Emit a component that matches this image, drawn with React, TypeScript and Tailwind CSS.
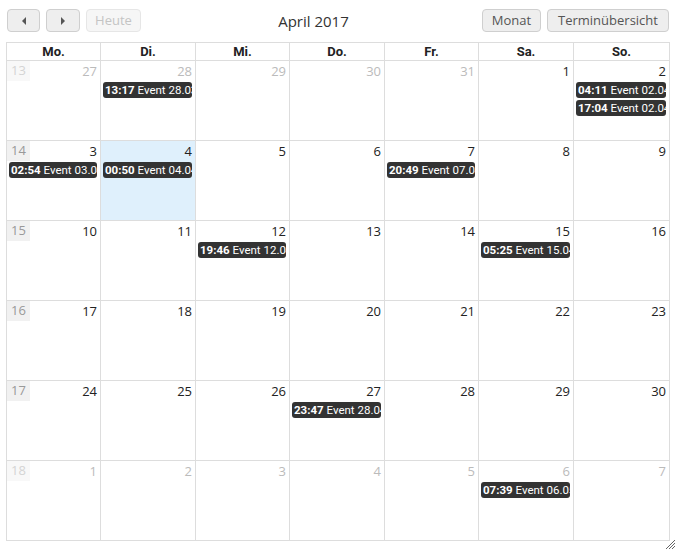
import React from "react";

type Ev = { time: string; label: string };
type Day = { n: number; other?: boolean; today?: boolean; events?: Ev[] };

const weeks: { wk: number; faded?: boolean; days: Day[] }[] = [
  {
    wk: 13,
    faded: true,
    days: [
      { n: 27, other: true },
      { n: 28, other: true, events: [{ time: "13:17", label: "Event 28.03" }] },
      { n: 29, other: true },
      { n: 30, other: true },
      { n: 31, other: true },
      { n: 1 },
      { n: 2, events: [{ time: "04:11", label: "Event 02.04" }, { time: "17:04", label: "Event 02.04" }] },
    ],
  },
  {
    wk: 14,
    days: [
      { n: 3, events: [{ time: "02:54", label: "Event 03.04" }] },
      { n: 4, today: true, events: [{ time: "00:50", label: "Event 04.04" }] },
      { n: 5 },
      { n: 6 },
      { n: 7, events: [{ time: "20:49", label: "Event 07.04" }] },
      { n: 8 },
      { n: 9 },
    ],
  },
  {
    wk: 15,
    days: [
      { n: 10 },
      { n: 11 },
      { n: 12, events: [{ time: "19:46", label: "Event 12.04" }] },
      { n: 13 },
      { n: 14 },
      { n: 15, events: [{ time: "05:25", label: "Event 15.04" }] },
      { n: 16 },
    ],
  },
  {
    wk: 16,
    days: [{ n: 17 }, { n: 18 }, { n: 19 }, { n: 20 }, { n: 21 }, { n: 22 }, { n: 23 }],
  },
  {
    wk: 17,
    days: [
      { n: 24 },
      { n: 25 },
      { n: 26 },
      { n: 27, events: [{ time: "23:47", label: "Event 28.04" }] },
      { n: 28 },
      { n: 29 },
      { n: 30 },
    ],
  },
  {
    wk: 18,
    faded: true,
    days: [
      { n: 1, other: true },
      { n: 2, other: true },
      { n: 3, other: true },
      { n: 4, other: true },
      { n: 5, other: true },
      { n: 6, other: true, events: [{ time: "07:39", label: "Event 06.05" }] },
      { n: 7, other: true },
    ],
  },
];

const dayNames = ["Mo.", "Di.", "Mi.", "Do.", "Fr.", "Sa.", "So."];

function Arrow({ dir }: { dir: "left" | "right" }) {
  return (
    <svg width="6" height="8" viewBox="0 0 6 8" className="fill-[#555]">
      {dir === "left" ? <path d="M5 0 L1 4 L5 8 Z" /> : <path d="M1 0 L5 4 L1 8 Z" />}
    </svg>
  );
}

const btn =
  "h-[23px] rounded-[4px] border border-[#cfcfcf] bg-[#eeeeee] text-[13px] text-[#555] flex items-center justify-center";

export default function App() {
  return (
    <div className="relative h-[551px] w-[677px] bg-white font-['Open_Sans',sans-serif]">
      <div className="flex h-[42px] items-start px-[7px] pt-[9px]">
        <div className="flex gap-[6px]">
          <button className={`${btn} w-[33px]`}>
            <Arrow dir="left" />
          </button>
          <button className={`${btn} w-[34px]`}>
            <Arrow dir="right" />
          </button>
          <button className={`${btn} w-[55px] border-[#e6e6e6] bg-[#f6f6f6] text-[#c4c4c4]`}>Heute</button>
        </div>
        <div className="flex-1 pt-[1px] text-center text-[15px] text-[#333] pl-[4px]">April 2017</div>
        <div className="flex gap-[6px] pr-[1px]">
          <button className={`${btn} w-[59px]`}>Monat</button>
          <button className={`${btn} w-[122px]`}>Terminübersicht</button>
        </div>
      </div>

      <div className="ml-[6px] w-[664px] border-l border-t border-[#dddddd]">
        <div className="grid grid-cols-[94px_95px_94px_95px_94px_95px_96px]">
          {dayNames.map((d) => (
            <div
              key={d}
              className="h-[18px] border-b border-r border-[#dddddd] text-center text-[13px] font-bold leading-[17px] text-[#222] font-['Roboto',sans-serif]"
            >
              {d}
            </div>
          ))}
        </div>
        {weeks.map((w) => (
          <div key={w.wk} className="grid grid-cols-[94px_95px_94px_95px_94px_95px_96px]">
            {w.days.map((d, i) => (
              <div
                key={i}
                className={`h-[80px] border-b border-r border-[#dddddd] ${d.today ? "bg-[#dff0fc]" : "bg-white"}`}
              >
                <div className="flex h-[20px] items-start justify-between">
                  {i === 0 ? (
                    <span
                      className={`flex h-[20px] w-[23px] items-center justify-center text-[13px] ${
                        w.faded ? "bg-[#f8f8f8] text-[#d4d4d4]" : "bg-[#f1f1f1] text-[#999]"
                      }`}
                    >
                      {w.wk}
                    </span>
                  ) : (
                    <span />
                  )}
                  <span
                    className={`pr-[3px] pt-[1px] text-[13px] leading-[18px] ${
                      d.other ? "text-[#bbbbbb]" : "text-[#222]"
                    }`}
                  >
                    {d.n}
                  </span>
                </div>
                <div className="mt-[1px] flex flex-col gap-[2px] pl-[2px] pr-[3px]">
                  {d.events?.map((e, k) => (
                    <div
                      key={k}
                      className="h-[16px] overflow-hidden whitespace-nowrap rounded-[3px] bg-[#333333] px-[2px] text-[11.5px] leading-[16px] text-white font-['Roboto',sans-serif]"
                    >
                      <span className="font-bold">{e.time}</span> {e.label}
                    </div>
                  ))}
                </div>
              </div>
            ))}
          </div>
        ))}
      </div>

      <svg width="11" height="11" viewBox="0 0 11 11" className="absolute bottom-[1px] right-[1px] stroke-[#666]">
        <path d="M10 1 L1 10 M10 4 L4 10 M10 7 L7 10" strokeWidth="1" />
      </svg>
    </div>
  );
}
